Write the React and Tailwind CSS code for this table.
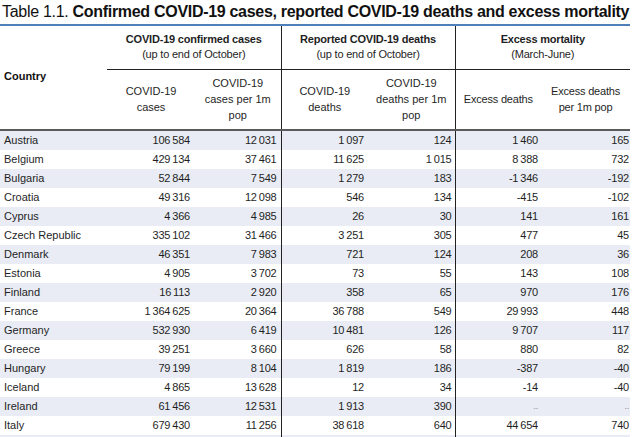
import React from 'react';

const rows = [
  ['Austria', '106 584', '12 031', '1 097', '124', '1 460', '165'],
  ['Belgium', '429 134', '37 461', '11 625', '1 015', '8 388', '732'],
  ['Bulgaria', '52 844', '7 549', '1 279', '183', '-1 346', '-192'],
  ['Croatia', '49 316', '12 098', '546', '134', '-415', '-102'],
  ['Cyprus', '4 366', '4 985', '26', '30', '141', '161'],
  ['Czech Republic', '335 102', '31 466', '3 251', '305', '477', '45'],
  ['Denmark', '46 351', '7 983', '721', '124', '208', '36'],
  ['Estonia', '4 905', '3 702', '73', '55', '143', '108'],
  ['Finland', '16 113', '2 920', '358', '65', '970', '176'],
  ['France', '1 364 625', '20 364', '36 788', '549', '29 993', '448'],
  ['Germany', '532 930', '6 419', '10 481', '126', '9 707', '117'],
  ['Greece', '39 251', '3 660', '626', '58', '880', '82'],
  ['Hungary', '79 199', '8 104', '1 819', '186', '-387', '-40'],
  ['Iceland', '4 865', '13 628', '12', '34', '-14', '-40'],
  ['Ireland', '61 456', '12 531', '1 913', '390', '..', '..'],
  ['Italy', '679 430', '11 256', '38 618', '640', '44 654', '740'],
  ['', '', '', '', '', '', ''],
];

// thin space between digit groups, like the source table
const fmt = (v) => v.replace(/ /g, '\u2009');

export default function App() {
  return (
    <div className="w-[635px] h-[437px] overflow-hidden bg-white text-[#1f1f1f]" style={{ fontFamily: '"Liberation Sans", Arial, sans-serif' }}>
      <div className="h-[24px] pl-[2px] pt-[2px] text-[16px] leading-[20px] tracking-[-0.3px] text-[#111] whitespace-nowrap">
        Table 1.1. <span className="font-bold">Confirmed COVID-19 cases, reported COVID-19 deaths and excess mortality</span>
      </div>

      <table className="w-[630px] table-fixed border-collapse border-t-2 border-[#4f7fb8] text-[11px]">
        <colgroup>
          <col className="w-[107px]" />
          <col className="w-[88px]" />
          <col className="w-[86px]" />
          <col className="w-[87px]" />
          <col className="w-[87px]" />
          <col className="w-[86px]" />
          <col className="w-[89px]" />
        </colgroup>
        <thead>
          <tr className="h-[44px]">
            <th rowSpan={2} className="text-left align-middle pl-[4px] font-bold text-[#111] border-b-2 border-[#5a5a5a] pb-[2px]">Country</th>
            <th colSpan={2} className="border-b border-[#222] font-normal leading-[15px] pb-[1px]">
              <div className="font-bold tracking-[-0.2px]">COVID-19 confirmed cases</div>
              <div className="tracking-[-0.2px]">(up to end of October)</div>
            </th>
            <th colSpan={2} className="border-b border-l border-[#222] font-normal leading-[15px] pb-[1px]">
              <div className="font-bold tracking-[-0.2px]">Reported COVID-19 deaths</div>
              <div className="tracking-[-0.2px]">(up to end of October)</div>
            </th>
            <th colSpan={2} className="border-b border-l border-[#222] font-normal leading-[15px] pb-[1px]">
              <div className="font-bold tracking-[-0.2px]">Excess mortality</div>
              <div className="tracking-[-0.2px]">(March-June)</div>
            </th>
          </tr>
          <tr className="h-[61px] font-normal leading-[16px]">
            <th className="font-normal border-b-2 border-[#5a5a5a] px-[6px]">COVID-19<br />cases</th>
            <th className="font-normal border-b-2 border-[#5a5a5a] px-[6px]">COVID-19<br />cases per 1m<br />pop</th>
            <th className="font-normal border-b-2 border-l border-[#5a5a5a] border-l-[#222] px-[6px]">COVID-19<br />deaths</th>
            <th className="font-normal border-b-2 border-[#5a5a5a] px-[6px]">COVID-19<br />deaths per 1m<br />pop</th>
            <th className="font-normal border-b-2 border-l border-[#5a5a5a] border-l-[#222] px-[2px] tracking-[-0.2px]">Excess deaths</th>
            <th className="font-normal border-b-2 border-[#5a5a5a] px-[4px] tracking-[-0.2px]">Excess deaths<br />per 1m pop</th>
          </tr>
        </thead>
        <tbody>
          {rows.map((r, i) => (
            <tr key={i} className={`h-[19px] ${i % 2 === 0 ? 'bg-[#e9ecf4]' : 'bg-white'}`}>
              <td className="pl-[4px] leading-[19px] whitespace-nowrap">{r[0]}</td>
              <td className="text-right pr-[5px] tracking-[-0.2px]">{fmt(r[1])}</td>
              <td className="text-right pr-[4px] tracking-[-0.2px]">{fmt(r[2])}</td>
              <td className="text-right pr-[4px] border-l border-[#222] tracking-[-0.2px]">{fmt(r[3])}</td>
              <td className="text-right pr-[3px] tracking-[-0.2px]">{fmt(r[4])}</td>
              <td className={`text-right pr-[3px] border-l border-[#222] tracking-[-0.2px] ${r[5] === '..' ? 'text-[#888] text-[9px]' : ''}`}>{fmt(r[5])}</td>
              <td className={`text-right pr-[1px] tracking-[-0.2px] ${r[6] === '..' ? 'text-[#888] text-[9px]' : ''}`}>{fmt(r[6])}</td>
            </tr>
          ))}
        </tbody>
      </table>
    </div>
  );
}
